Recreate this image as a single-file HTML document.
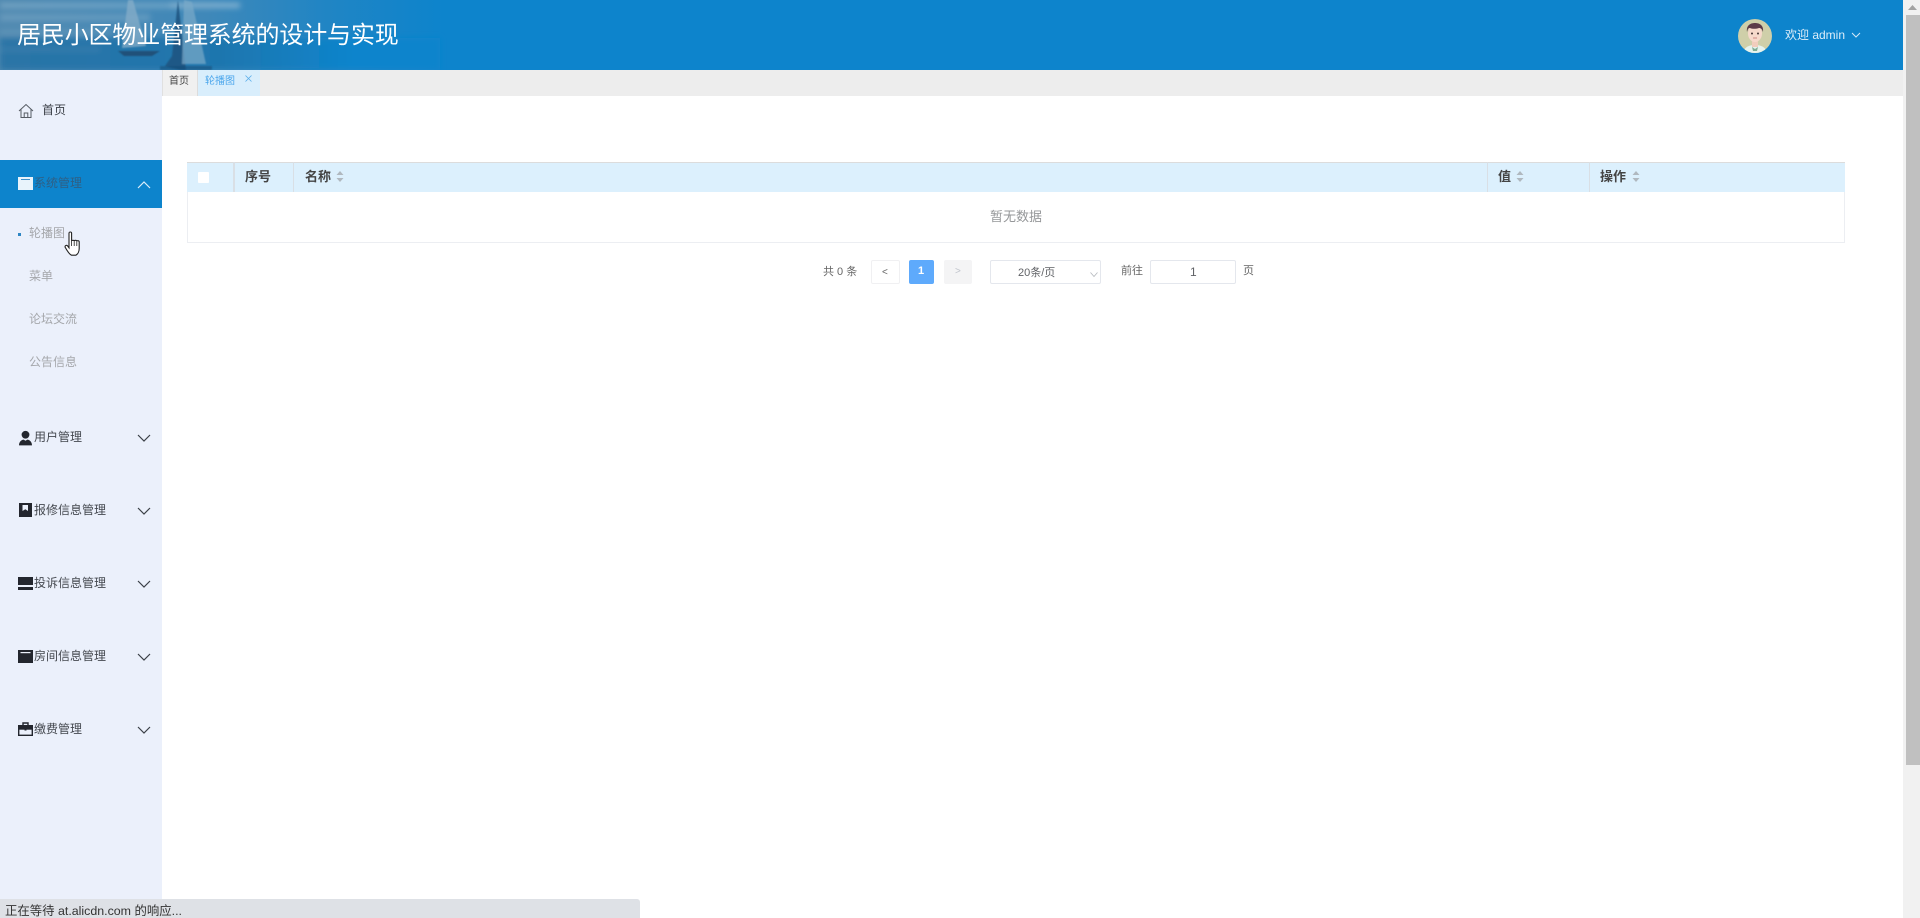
<!DOCTYPE html>
<html lang="zh-CN">
<head>
<meta charset="utf-8">
<title>居民小区物业管理系统的设计与实现</title>
<style>
html,body{margin:0;padding:0;width:1920px;height:918px;overflow:hidden;background:#fff;font-family:"Liberation Sans","Noto Sans CJK SC",sans-serif;}
.a{position:absolute;white-space:nowrap;line-height:1;}
.box{position:absolute;box-sizing:border-box;}
svg{position:absolute;overflow:visible;}
.m{font-size:12px;color:#44484f;left:34px;}
.s{font-size:12px;color:#a5a7ab;left:29px;}
.th{font-size:13px;font-weight:700;color:#444;top:170px;}
.chev{fill:none;stroke:#3a3f46;stroke-width:1.2;}
</style>
</head>
<body>
<!-- header -->
<div class="box" style="left:0;top:0;width:1903px;height:70px;background:#0d84cc;"></div>
<svg style="left:0;top:0" width="520" height="70" viewBox="0 0 520 70">
<defs>
<clipPath id="hc"><rect width="520" height="70"/></clipPath>
<filter id="bl" x="-10%" y="-10%" width="120%" height="120%"><feGaussianBlur stdDeviation=".9"/></filter>
<filter id="bl2" x="-10%" y="-50%" width="120%" height="200%"><feGaussianBlur stdDeviation="3"/></filter>
<linearGradient id="fade" x1="0" x2="1" y1="0" y2="0">
<stop offset="0" stop-color="#5089b0"/><stop offset=".4" stop-color="#3f88b9"/><stop offset=".62" stop-color="#2185c4"/><stop offset=".85" stop-color="#0d84cc"/>
</linearGradient>
<linearGradient id="sea" x1="0" x2="1" y1="0" y2="0">
<stop offset="0" stop-color="#2a74a6"/><stop offset=".5" stop-color="#1f76ae"/><stop offset=".8" stop-color="#0d84cc"/>
</linearGradient>
</defs>
<g clip-path="url(#hc)">
<rect width="520" height="70" fill="url(#fade)"/>
<g filter="url(#bl2)">
<rect y="38" width="440" height="32" fill="url(#sea)"/>
<rect y="3" width="240" height="5" fill="#9cc0d8" opacity=".5"/>
<rect x="170" y="3" width="70" height="4" fill="#a5c6dc" opacity=".5"/>
<rect x="0" y="14" width="150" height="7" fill="#86afcb" opacity=".45"/>
<rect x="0" y="30" width="110" height="4" fill="#7aa6c4" opacity=".45"/>
<rect x="0" y="48" width="100" height="3" fill="#5a93ba" opacity=".4"/>
</g>
<g filter="url(#bl)">
<path d="M128 0 L133 0 L146 46 L122 48 Z" fill="#86adc8" opacity=".75"/>
<path d="M118 51 L160 51 L152 56 L124 56 Z" fill="#1d4a70" opacity=".85"/>
<path d="M178 0 L172 56 L165 66 L180 70 L186 70 Z" fill="#1c5582" opacity=".9"/>
<path d="M184 0 L192 2 L206 64 L182 64 Z" fill="#7aa9c9" opacity=".7"/>
<rect x="160" y="66" width="52" height="4" fill="#164c77" opacity=".55"/>
</g>
</g>
</svg>
<div class="a" style="left:17px;top:22px;font-size:24px;letter-spacing:-.15px;color:#fff;padding-top:2px;">居民小区物业管理系统的设计与实现</div>
<!-- avatar -->
<svg style="left:1738px;top:19px" width="34" height="34" viewBox="0 0 34 34">
<clipPath id="av"><circle cx="17" cy="17" r="17"/></clipPath>
<g clip-path="url(#av)">
<rect width="34" height="34" fill="#cfcfa9"/>
<path d="M5 34c1-6 6-8 12-8s11 2 12 8z" fill="#e6f3ee"/>
<rect x="14" y="21" width="6" height="7" fill="#f1cdbd"/>
<ellipse cx="17" cy="14.5" rx="7" ry="8.5" fill="#f6d9cb"/>
<path d="M9 13C8 6 13 4 17 4s9 2 8 9c-1-3-2-4-4-4-3 1-7 1-9 0-2 0-2 1-3 4z" fill="#5c3a48"/>
<circle cx="14" cy="14.5" r="1" fill="#433"/><circle cx="20" cy="14.5" r="1" fill="#433"/>
<path d="M15 19h4" stroke="#d08a86" stroke-width="1"/>
<path d="M14 28l3 2 3-2-1 4h-4z" fill="#7fae95"/>
</g>
</svg>
<div class="a" style="left:1785px;top:29px;font-size:12px;color:#dcedf9;">欢迎 admin</div>
<svg style="left:1851px;top:32px" width="10" height="6" viewBox="0 0 10 6"><path d="M1 1l4 4 4-4" fill="none" stroke="#d5e9f7" stroke-width="1"/></svg>

<!-- scrollbar -->
<div class="box" style="left:1903px;top:0;width:17px;height:918px;background:#f1f1f1;"></div>
<div class="box" style="left:1906px;top:15px;width:14px;height:750px;background:#c0c0c0;"></div>
<svg style="left:1908px;top:5px" width="9" height="5" viewBox="0 0 9 5"><path d="M4.500 0L9 5H0z" fill="#a3a3a3"/></svg>

<!-- sidebar -->
<div class="box" style="left:0;top:70px;width:162px;height:848px;background:#ebf0fb;"></div>
<svg style="left:18px;top:103px" width="16" height="16" viewBox="0 0 16 16"><path d="M1 8L8 1.500 15 8M3 6.500V14.500H13V6.500M6.200 14.500V10H9.800V14.500" fill="none" stroke="#555b63" stroke-width="1"/></svg>
<div class="a" style="left:42px;top:104px;font-size:12px;color:#3c4048;">首页</div>

<div class="box" style="left:0;top:160px;width:162px;height:48px;background:#0d84cc;"></div>
<div class="box" style="left:18px;top:177px;width:15px;height:13px;background:#e8f3fb;"></div>
<div class="box" style="left:21px;top:179px;width:9px;height:1px;background:#3d8fca;"></div>
<div class="a m" style="top:177px;color:#2f5f84;">系统管理</div>
<svg style="left:137px;top:181px" width="14" height="8" viewBox="0 0 14 8"><path d="M1 7l6-6 6 6" fill="none" stroke="#dcedf9" stroke-width="1.200"/></svg>

<div class="box" style="left:18px;top:233px;width:3px;height:3px;background:#2d86c4;"></div>
<div class="a s" style="top:227px;">轮播图</div>
<div class="a s" style="top:270px;">菜单</div>
<div class="a s" style="top:313px;">论坛交流</div>
<div class="a s" style="top:356px;">公告信息</div>

<!-- cursor -->
<svg style="left:64px;top:231px" width="20" height="26" viewBox="0 0 20 26">
<path d="M5 2.200c0-1.600 2.600-1.600 2.600 0V10c0-.9 2.500-1 2.600 0 .1-.9 2.500-.9 2.600.2.2-.8 2.400-.7 2.400.7v6.500c0 3-1.300 5.800-3.400 6.800H7.500C5.500 23.500 3.300 20 1.300 16.500c-.9-1.700 1.200-3 2.400-1.500L5 16.800z" fill="#fff" stroke="#222" stroke-width="1.100"/>
<path d="M7.600 10v5M10.200 10v5M12.800 10.200V15" stroke="#222" stroke-width=".8" fill="none"/>
</svg>

<!-- user -->
<svg style="left:19px;top:430px" width="13" height="16" viewBox="0 0 14 16"><circle cx="7" cy="4.500" r="4.200" fill="#23262e"/><path d="M0 16c0-4 2.500-6 5-6.300L7 11l2-1.300c2.500.3 5 2.300 5 6.300z" fill="#23262e"/></svg>
<div class="a m" style="top:431px;">用户管理</div>
<svg style="left:137px;top:434px" width="14" height="8" viewBox="0 0 14 8"><path class="chev" d="M1 1l6 6 6-6"/></svg>

<svg style="left:19px;top:503px" width="13" height="14" viewBox="0 0 13 14"><rect width="13" height="14" fill="#23262e"/><path d="M3.500 2h5.500v6L6.300 6.300 3.500 8z" fill="#ebf0fb"/></svg>
<div class="a m" style="top:504px;">报修信息管理</div>
<svg style="left:137px;top:507px" width="14" height="8" viewBox="0 0 14 8"><path class="chev" d="M1 1l6 6 6-6"/></svg>

<svg style="left:18px;top:577px" width="15" height="13" viewBox="0 0 15 13"><rect width="15" height="8" fill="#23262e"/><rect y="10" width="15" height="3" fill="#23262e"/></svg>
<div class="a m" style="top:577px;">投诉信息管理</div>
<svg style="left:137px;top:580px" width="14" height="8" viewBox="0 0 14 8"><path class="chev" d="M1 1l6 6 6-6"/></svg>

<svg style="left:18px;top:650px" width="15" height="13" viewBox="0 0 15 13"><rect width="15" height="13" fill="#23262e"/><rect x="2.500" y="2" width="10" height="1.200" fill="#ebf0fb"/></svg>
<div class="a m" style="top:650px;">房间信息管理</div>
<svg style="left:137px;top:653px" width="14" height="8" viewBox="0 0 14 8"><path class="chev" d="M1 1l6 6 6-6"/></svg>

<svg style="left:18px;top:722px" width="15" height="14" viewBox="0 0 15 14"><path d="M5 3V1h5v2" fill="none" stroke="#23262e" stroke-width="1.400"/><rect y="3" width="15" height="4" fill="#23262e"/><rect x=".7" y="7" width="13.600" height="6.300" fill="#ebf0fb" stroke="#23262e" stroke-width="1.400"/><rect x="6.500" y="5.500" width="2" height="3" fill="#23262e"/></svg>
<div class="a m" style="top:723px;">缴费管理</div>
<svg style="left:137px;top:726px" width="14" height="8" viewBox="0 0 14 8"><path class="chev" d="M1 1l6 6 6-6"/></svg>

<!-- tabs -->
<div class="box" style="left:162px;top:70px;width:1741px;height:26px;background:#ededed;"></div>
<div class="box" style="left:162px;top:70px;width:36px;height:26px;background:#f0f0f0;border-left:1px solid #e0e0e0;border-right:1px solid #dcdcdc;"></div>
<div class="a" style="left:169px;top:77px;font-size:10px;color:#444;">首页</div>
<div class="box" style="left:198px;top:70px;width:62px;height:26px;background:#d9eefc;"></div>
<div class="a" style="left:205px;top:77px;font-size:10px;color:#4ba6ec;">轮播图</div>
<svg style="left:245px;top:75px" width="7" height="7" viewBox="0 0 7 7"><path d="M.5.500l6 6M6.500.500l-6 6" stroke="#5aaeea" stroke-width=".8"/></svg>

<!-- table -->
<div class="box" style="left:187px;top:162px;width:1658px;height:81px;background:#fff;border:1px solid #eceef2;border-top:none;"></div>
<div class="box" style="left:187px;top:162px;width:1658px;height:30px;background:#dcf0fd;border-top:1px solid #dcdcdc;"></div>
<div class="box" style="left:233px;top:162px;width:1.500px;height:30px;background:#d9dfe5;"></div>
<div class="box" style="left:292.500px;top:162px;width:1.500px;height:30px;background:#d9dfe5;"></div>
<div class="box" style="left:1486.500px;top:162px;width:1.500px;height:30px;background:#d9dfe5;"></div>
<div class="box" style="left:1588.500px;top:162px;width:1.500px;height:30px;background:#d9dfe5;"></div>
<div class="box" style="left:198px;top:172px;width:11px;height:11px;background:#fff;border-radius:1px;"></div>
<div class="a th" style="left:245px;">序号</div>
<div class="a th" style="left:305px;">名称</div>
<div class="a th" style="left:1498px;">值</div>
<div class="a th" style="left:1600px;">操作</div>
<svg style="left:336px;top:171px" width="8" height="11" viewBox="0 0 8 11"><path d="M4 0l3.500 4H.5zM4 11L.5 7h7z" fill="#b0b8bf"/></svg>
<svg style="left:1516px;top:171px" width="8" height="11" viewBox="0 0 8 11"><path d="M4 0l3.500 4H.5zM4 11L.5 7h7z" fill="#b0b8bf"/></svg>
<svg style="left:1632px;top:171px" width="8" height="11" viewBox="0 0 8 11"><path d="M4 0l3.500 4H.5zM4 11L.5 7h7z" fill="#b0b8bf"/></svg>
<div class="a" style="left:990px;top:210px;font-size:13px;color:#959799;">暂无数据</div>

<!-- pagination -->
<div class="a" style="left:823px;top:267px;font-size:11px;color:#666;">共 0 条</div>
<div class="box" style="left:871px;top:260px;width:29px;height:24px;background:#fff;border:1px solid #f0f0f2;border-radius:2px;"></div>
<div class="a" style="left:882px;top:268px;font-size:10px;color:#666;">&lt;</div>
<div class="box" style="left:909px;top:260px;width:25px;height:24px;background:#5eaafc;border-radius:2px;"></div>
<div class="a" style="left:918px;top:266px;font-size:11px;font-weight:700;color:#fff;">1</div>
<div class="box" style="left:944px;top:260px;width:28px;height:24px;background:#f4f4f5;border-radius:2px;"></div>
<div class="a" style="left:955px;top:267px;font-size:10px;color:#c0c4cc;">&gt;</div>
<div class="box" style="left:990px;top:260px;width:111px;height:24px;background:#fff;border:1px solid #e4e7ed;border-radius:2px;"></div>
<div class="a" style="left:1018px;top:268px;font-size:11px;color:#606266;">20条/页</div>
<svg style="left:1090px;top:272px" width="8" height="5" viewBox="0 0 8 5"><path d="M.5.500L4 4.500 7.500.500" fill="none" stroke="#b5b8bd" stroke-width=".8"/></svg>
<div class="a" style="left:1121px;top:266px;font-size:11px;color:#666;">前往</div>
<div class="box" style="left:1150px;top:260px;width:86px;height:24px;background:#fff;border:1px solid #e4e7ed;border-radius:2px;"></div>
<div class="a" style="left:1190px;top:266px;font-size:12px;color:#606266;">1</div>
<div class="a" style="left:1243px;top:266px;font-size:11px;color:#666;">页</div>

<!-- status bar -->
<div class="box" style="left:0;top:899px;width:640px;height:19px;background:#dee1e6;border-top-right-radius:3px;"></div>
<div class="a" style="left:5px;top:905px;font-size:12.400px;color:#333;">正在等待 at.alicdn.com 的响应...</div>
</body>
</html>
